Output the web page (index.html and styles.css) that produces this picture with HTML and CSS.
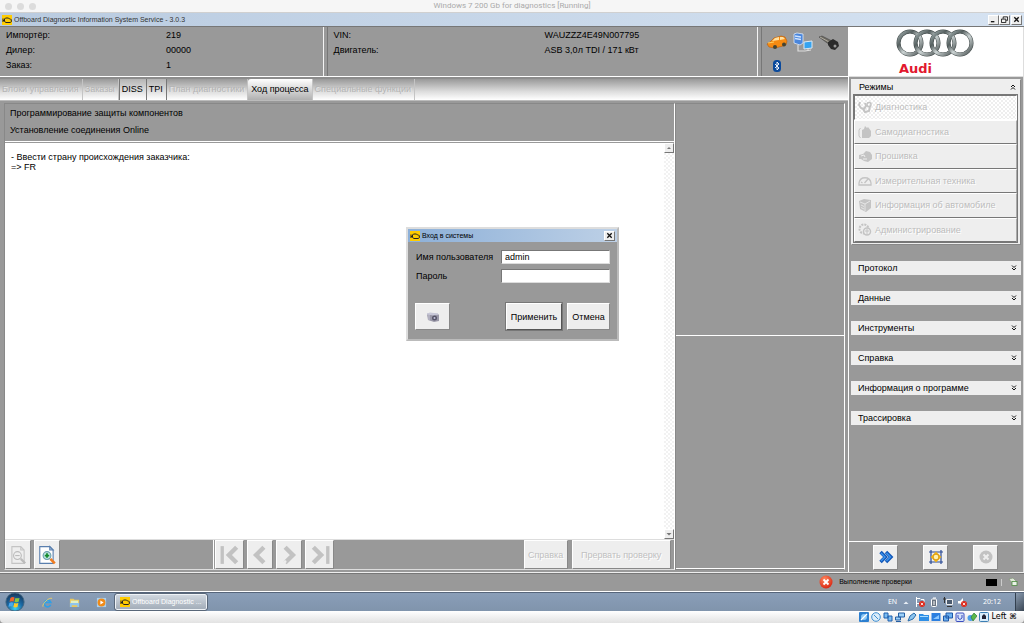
FILE: index.html
```html
<!DOCTYPE html>
<html lang="ru">
<head>
<meta charset="utf-8">
<meta name="viewport" content="width=device-width, initial-scale=1">
<title>Windows 7 200 Gb for diagnostics [Running]</title>
<link rel="stylesheet" href="styles.css">
</head>
<body>
<svg class="defs" aria-hidden="true">
  <defs>
    <linearGradient id="chrome" x1="0" y1="0" x2="1" y2="1"><stop offset="0" stop-color="#a5b2b2"/><stop offset=".3" stop-color="#566060"/><stop offset=".55" stop-color="#ccd4d4"/><stop offset="1" stop-color="#4a5252"/></linearGradient>
    <radialGradient id="orb" cx=".5" cy=".85" r=".8"><stop offset="0" stop-color="#3fd0f0"/><stop offset=".5" stop-color="#1b6aa5"/><stop offset="1" stop-color="#17395f"/></radialGradient>
    <radialGradient id="red" cx=".4" cy=".3" r=".8"><stop offset="0" stop-color="#ff8a60"/><stop offset="1" stop-color="#d51a08"/></radialGradient>
  </defs>
  <symbol id="engine" viewBox="0 0 10 10"><rect width="10" height="10" fill="#ffcc00"/><path d="M1 3.500v3.500M1 5.500h1.500M2.500 4l1-1h3l1 1h1l.8.800v2l-1 .7H4L2.500 6.500z" fill="none" stroke="#222" stroke-width="1"/></symbol>
  <symbol id="up2" viewBox="0 0 6 6"><path d="M1 3l2-2 2 2M1 5.500l2-2 2 2" fill="none" stroke="#111"/></symbol>
  <symbol id="down2" viewBox="0 0 6 6"><path d="M1 .5l2 2 2-2M1 3l2 2 2-2" fill="none" stroke="#111"/></symbol>
  <symbol id="cross" viewBox="0 0 8 8"><path d="M1.500 1.500l5 5m0-5l-5 5" stroke="#111" stroke-width="1.500"/></symbol>
</svg>

<header class="host-title"><span class="lights"><i></i><i></i><i></i></span>Windows 7 200 Gb for diagnostics [Running]</header>

<div class="app-title">
  <svg class="i10"><use href="#engine"/></svg>
  <span class="app-name">Offboard Diagnostic Information System Service - 3.0.3</span>
  <button class="win-btn" aria-label="Свернуть"><svg viewBox="0 0 8 8"><path d="M1 6.500h4" stroke="#111" stroke-width="1.500"/></svg></button>
  <button class="win-btn" aria-label="Восстановить"><svg viewBox="0 0 8 8"><path d="M2.500 3V1h5v4H6M.5 3.500h5v4h-5z" fill="none" stroke="#111"/></svg></button>
  <button class="win-btn win-close" aria-label="Закрыть"><svg><use href="#cross"/></svg></button>
</div>

<div class="workspace">
  <main class="left">
    <section class="summary">
      <dl class="facts facts-order">
        <dt>Импортёр:</dt><dd>219</dd>
        <dt>Дилер:</dt><dd>00000</dd>
        <dt>Заказ:</dt><dd>1</dd>
      </dl>
      <dl class="facts facts-car">
        <dt>VIN:</dt><dd>WAUZZZ4E49N007795</dd>
        <dt>Двигатель:</dt><dd>ASB 3,0л TDI / 171 кВт</dd>
      </dl>
      <div class="devices">
        <svg viewBox="0 0 22 16"><path d="M1 9l3-2 4-4 7-2 4 1 2 4-1 4-3 1-8 2-6-1z" fill="#f58a12" stroke="#b85a08" stroke-width=".6"/><path d="M6 6l3-3 4-1v3zM14 2l3 0 2 2-5 1z" fill="#ffe0a0"/><path d="M2 8l6-1" stroke="#ffd060"/><circle cx="9" cy="12" r="2" fill="#443"/><circle cx="18" cy="9.500" r="2" fill="#443"/></svg>
        <svg viewBox="0 0 22 22"><path d="M2 2l3-1 6 1v9l-3 2-6-2z" fill="#4a86dc" stroke="#dde8f8" stroke-width=".8"/><path d="M3 4l6 1M3 6.500l6 1" stroke="#cfe3ff" stroke-width="1.500"/><path d="M6 13v6h7" fill="none" stroke="#ddd" stroke-width="1.200"/><path d="M12 10l8-1v7l-8 1z" fill="#35a3f0" stroke="#dceaf5"/><path d="M13 19l6-1M16 16v3" stroke="#ddd"/></svg>
        <svg viewBox="0 0 22 18"><path d="M1 3l3-1 10 5-2 4z" fill="#6d6a62" stroke="#444" stroke-width=".6"/><path d="M2 3l9 5" stroke="#b0aca0"/><path d="M10 8l5-3 5 3 1 4-4 4-4-1-3-4z" fill="#2b2b2b"/><circle cx="17" cy="12" r="1.500" fill="#999"/></svg>
        <svg viewBox="0 0 22 14"><rect x="7" y="1" width="8" height="12" rx="3.500" fill="#0b4a9c"/><path d="M9 5l4 4-2 2V3l2 2-4 4" fill="none" stroke="#fff" stroke-width=".9"/></svg>
      </div>
    </section>

    <nav class="tabs">
      <button class="tab" disabled>Блоки управления</button>
      <button class="tab" disabled>Заказы</button>
      <button class="tab on">DISS</button>
      <button class="tab on">TPI</button>
      <button class="tab" disabled>План диагностики</button>
      <button class="tab current">Ход процесса</button>
      <button class="tab" disabled>Специальные функции</button>
    </nav>

    <div class="body">
      <section class="process">
        <div class="steps"><p>Программирование защиты компонентов</p><p>Установление соединения Online</p></div>
        <div class="log">
          <p>- Ввести страну происхождения заказчика:<br>=&gt; FR</p>
          <div class="scroll">
            <button aria-label="Вверх"><svg viewBox="0 0 8 8"><path d="M2 5l2-2 2 2z" fill="#777"/></svg></button>
            <button aria-label="Вниз"><svg viewBox="0 0 8 8"><path d="M1.500 3h5L4 5.500z" fill="#777"/></svg></button>
          </div>
        </div>
        <div class="toolbar">
          <div class="tools tools-zoom">
            <button class="tool" disabled aria-label="Уменьшить"><svg viewBox="0 0 18 18"><path d="M3.500 1.500h8l3 3v12h-11zM11.500 1.500v3h3" fill="none" stroke="#c4c4c4"/><circle cx="8.500" cy="9.500" r="3.500" fill="#eee" stroke="#bbb"/><path d="M6.500 9.500h4" stroke="#bbb"/><path d="M11.500 12.500l4 4" stroke="#bbb" stroke-width="2"/></svg></button>
            <button class="tool" aria-label="Увеличить"><svg viewBox="0 0 18 18"><path d="M2.500 1.500h9l3 3v12h-12z" fill="#fff" stroke="#5a7fae"/><path d="M11.500 1.500v3h3z" fill="#b9d2ec" stroke="#5a7fae"/><path d="M12 12.500l4 4" stroke="#f07c20" stroke-width="2.400"/><circle cx="9" cy="9.500" r="3.500" fill="#bfe4dc" stroke="#6a9fae"/><path d="M7 9.500h4M9 7.500v4" stroke="#138a2e" stroke-width="1.600"/></svg></button>
          </div>
          <div class="tools tools-nav">
            <button class="tool tool-end" disabled aria-label="В начало"><svg viewBox="0 0 18 18"><path d="M2 1v16" stroke="#c2c2c2" stroke-width="3"/><path d="M15 2L8 9l7 7" fill="none" stroke="#c2c2c2" stroke-width="4"/></svg></button>
            <button class="tool" disabled aria-label="Назад"><svg viewBox="0 0 18 18"><path d="M12.500 2l-7 7 7 7" fill="none" stroke="#c2c2c2" stroke-width="4"/></svg></button>
            <button class="tool" disabled aria-label="Вперёд"><svg viewBox="0 0 18 18"><path d="M5.500 2l7 7-7 7" fill="none" stroke="#c2c2c2" stroke-width="4"/><circle cx="5.500" cy="15" r="1.300" fill="#eee"/></svg></button>
            <button class="tool tool-end" disabled aria-label="В конец"><svg viewBox="0 0 18 18"><path d="M16 1v16" stroke="#c2c2c2" stroke-width="3"/><path d="M3 2l7 7-7 7" fill="none" stroke="#c2c2c2" stroke-width="4"/></svg></button>
          </div>
          <button class="tool tool-help" disabled>Справка</button>
          <button class="tool tool-stop" disabled>Прервать проверку</button>
        </div>
      </section>
      <aside class="panes"><div class="pane-top"></div><div class="pane-bottom"></div></aside>
    </div>
  </main>

  <aside class="right">
    <div class="brand">
      <svg class="rings" viewBox="0 0 78 28"><g fill="none" stroke="#3d4646" stroke-width="4"><circle cx="14" cy="14" r="11.500"/><circle cx="31" cy="14" r="11.500"/><circle cx="47" cy="14" r="11.500"/><circle cx="64" cy="14" r="11.500"/></g><g fill="none" stroke="url(#chrome)" stroke-width="3"><circle cx="14" cy="14" r="11.500"/><circle cx="31" cy="14" r="11.500"/><circle cx="47" cy="14" r="11.500"/><circle cx="64" cy="14" r="11.500"/></g></svg>
      <span class="brand-name">Audi</span>
    </div>
    <div class="groups">
      <section class="modes">
        <button class="group">Режимы<svg><use href="#up2"/></svg></button>
        <div class="mode-list">
          <button class="mode pressed" disabled><svg viewBox="0 0 14 14"><path d="M2 2L1 5l2 3 3 1 2-3-1-3M5 9l2 3 4-1 1-5" fill="none" stroke="#c4c4c4" stroke-width="2"/><circle cx="11" cy="4.500" r="2" fill="none" stroke="#c4c4c4" stroke-width="1.500"/></svg>Диагностика</button>
          <button class="mode" disabled><svg viewBox="0 0 14 14"><path d="M4 13V5l2-1 1-3 2 2 1-1 3 4v5l-2 2z" fill="#c4c4c4"/><path d="M2.500 3L1 5v6l1.500 2" fill="none" stroke="#c4c4c4"/></svg>Самодиагностика</button>
          <button class="mode" disabled><svg viewBox="0 0 14 14"><path d="M1 6l4-1 3-3 4 1 2 3v4l-4 3-4-1-3-2-2 0z" fill="#c4c4c4"/><path d="M3 7l3-1 1 2M5 10l4 0" stroke="#eee" fill="none"/></svg>Прошивка</button>
          <button class="mode" disabled><svg viewBox="0 0 14 14"><path d="M1 11V9c1-7 11-7 12 0v2zM6.500 9L10 5M3 8l1.500 1" fill="none" stroke="#c4c4c4" stroke-width="1.300"/></svg>Измерительная техника</button>
          <button class="mode" disabled><svg viewBox="0 0 14 14"><path d="M1 3l5-2 7 1v8l-5 4-6-3z" fill="#c4c4c4"/><path d="M2 4l5 2 5-3M7 6v7M3 7l3 1.500M3 9.500L6 11" stroke="#eee" stroke-width=".8" fill="none"/></svg>Информация об автомобиле</button>
          <button class="mode" disabled><svg viewBox="0 0 14 14"><circle cx="6" cy="6" r="4.500" fill="none" stroke="#c4c4c4" stroke-width="2" stroke-dasharray="2 1"/><circle cx="9" cy="8.500" r="3.500" fill="#eee" stroke="#c4c4c4" stroke-width="1.500"/><path d="M7 8h4M9 6v6" stroke="#c4c4c4"/></svg>Администрирование</button>
        </div>
      </section>
      <button class="group">Протокол<svg><use href="#down2"/></svg></button>
      <button class="group">Данные<svg><use href="#down2"/></svg></button>
      <button class="group">Инструменты<svg><use href="#down2"/></svg></button>
      <button class="group">Справка<svg><use href="#down2"/></svg></button>
      <button class="group">Информация о программе<svg><use href="#down2"/></svg></button>
      <button class="group">Трассировка<svg><use href="#down2"/></svg></button>
    </div>
    <div class="actions">
      <button class="action" aria-label="Далее"><svg viewBox="0 0 16 16"><path d="M2.500 3l5 5-5 5M8 3l5 5-5 5" fill="none" stroke="#1257b8" stroke-width="3.400"/><path d="M3 4l4 4-4 4M8.500 4l4 4-4 4" fill="none" stroke="#3b94ee" stroke-width="1.400"/></svg></button>
      <button class="action" aria-label="Развернуть"><svg viewBox="0 0 16 16"><path d="M3 1v14M13 1v14M1 3h14M1 13h14" stroke="#2a4a94" stroke-width="1.200"/><circle cx="8" cy="8" r="3" fill="#fff2b0" stroke="#e0a010" stroke-width="1.400"/><path d="M8 2.500l2 2.500H6zM8 13.500L6 11h4zM2.500 8L5 6v4zM13.500 8L11 10V6z" fill="#f0b010"/></svg></button>
      <button class="action" disabled aria-label="Отмена"><svg viewBox="0 0 16 16"><circle cx="8" cy="8" r="6.500" fill="#c2c2c2"/><path d="M5.500 5.500l5 5m0-5l-5 5" stroke="#eee" stroke-width="2"/></svg></button>
    </div>
  </aside>
</div>

<div class="status">
  <svg class="i14" viewBox="0 0 14 14"><circle cx="7" cy="7" r="6.500" fill="url(#red)"/><path d="M4.500 4.500l5 5m0-5l-5 5" stroke="#fff" stroke-width="1.800"/></svg>
  <span class="status-text">Выполнение проверки</span>
  <span class="meter"><i></i></span>
  <svg class="i10" viewBox="0 0 10 10"><path d="M1 2l4-1 3 3v3L4 6z" fill="#dfe8d8" stroke="#7b8f70" stroke-width=".6"/><rect x="4" y="4.500" width="5" height="4" fill="#eaf2e8" stroke="#4b8a40" stroke-width=".8"/></svg>
</div>

<footer class="taskbar">
  <button class="start" aria-label="Пуск"><svg viewBox="0 0 22 22"><circle cx="11" cy="11" r="10" fill="url(#orb)" stroke="#40647f"/><path d="M6 6.500q2-1.500 4.500-.5l-1 4.500q-2-1-4.500.2z" fill="#f0622a"/><path d="M11.500 6.500q2 1 4.500 0l-1 4.300q-2.500 1-4.500 0z" fill="#8cc63f"/><path d="M4.800 12q2-1.200 4.400-.2L8.200 16q-2-1-4.400.2z" fill="#49a8ee"/><path d="M10.200 12.200q2 1 4.500 0l-1 4.300q-2.500 1-4.500 0z" fill="#ffc928"/></svg></button>
  <button class="quick" aria-label="Internet Explorer"><svg viewBox="0 0 12 12"><path d="M9.500 8.500A3.600 3.600 0 1 1 9.600 6H3" fill="none" stroke="#2f9fe6" stroke-width="1.800"/><path d="M1 10.500C0 7 8 0 11 1.500" fill="none" stroke="#f0d060"/></svg></button>
  <button class="quick" aria-label="Проводник"><svg viewBox="0 0 12 12"><path d="M1 2h4l1 1h5v8H1z" fill="#e8c860"/><path d="M2 4h8v3H2z" fill="#dff0c8"/><path d="M1 6.500h10V11H9V9H3v2H1z" fill="#8ec4ee"/></svg></button>
  <button class="quick" aria-label="Проигрыватель"><svg viewBox="0 0 12 12"><rect x="1" y="1" width="10" height="10" fill="#a8d0f0"/><circle cx="6" cy="6" r="4.300" fill="#f08a18"/><path d="M4.800 3.800L8.300 6 4.800 8.200z" fill="#fff"/></svg></button>
  <button class="task"><svg class="i10"><use href="#engine"/></svg>Offboard Diagnostic ...</button>
  <div class="tray">
    <span>EN</span>
    <svg class="tray-up" viewBox="0 0 10 10"><path d="M2.500 7L5 4.500 7.500 7z" fill="#e8eef5"/></svg>
    <svg viewBox="0 0 10 10"><path d="M1.500 0v10M2 1.500h3l1 1h3v4H2" fill="none" stroke="#fff"/><circle cx="7" cy="7" r="3" fill="#dc2a1c"/><path d="M5.800 5.800l2.400 2.400m0-2.400L5.800 8.200" stroke="#fff" stroke-width=".8"/></svg>
    <svg viewBox="0 0 10 10"><rect x="2.500" y="2" width="5" height="7.500" rx="1" fill="#6a7480" stroke="#fff"/><path d="M4 1h3M5 4v4" stroke="#fff"/></svg>
    <svg viewBox="0 0 10 10"><path d="M3.500 2.500h6v5h-6z" fill="#4c5c70" stroke="#eee"/><path d="M0 2h3M1.500 0v6M4 9.500h5" stroke="#333"/></svg>
    <svg viewBox="0 0 10 10"><path d="M1 4h2l3-3v8L3 6.500H1z" fill="#fff"/><circle cx="7" cy="7" r="3" fill="#dc2a1c"/><path d="M5.800 5.800l2.400 2.400m0-2.400L5.800 8.200" stroke="#fff" stroke-width=".8"/></svg>
    <time>20:12</time>
  </div>
  <button class="desktop" aria-label="Рабочий стол"></button>
</footer>

<footer class="host-status">
  <svg viewBox="0 0 10 10"><rect width="10" height="10" rx="1" fill="#2c7fd0"/><circle cx="5" cy="5" r="3" fill="#8cc8f4"/><path d="M2 8l6-6" stroke="#fff" stroke-width="1.200"/></svg>
  <svg viewBox="0 0 10 10"><circle cx="5" cy="5" r="4.300" fill="#dcedfa" stroke="#3f8fd2"/><path d="M3 3l4 4" stroke="#3f8fd2"/></svg>
  <svg viewBox="0 0 10 10"><path d="M1 1h4v5H1zM5 4h4v5H5z" fill="#7cbcf0" stroke="#1c5fae"/></svg>
  <svg viewBox="0 0 10 10"><path d="M3.500 1h6v4h-6zM.5 5h5v3h-5z" fill="#9cd0f8" stroke="#245fa4"/><path d="M1 9.500h5" stroke="#245fa4"/></svg>
  <svg viewBox="0 0 10 10"><path d="M1 9l2-5 4-3 2 2-3 4z" fill="#8cc4ee" stroke="#2a6cab"/></svg>
  <svg viewBox="0 0 10 10"><path d="M0 2h4l1 1h5v6H0z" fill="#2f8fe6"/><path d="M1 4.500h8" stroke="#a8dcff"/></svg>
  <svg viewBox="0 0 10 10"><rect x=".5" y="1" width="9" height="8" fill="#2c7fe0"/><path d="M2 7l6-4v4z" fill="#8cc8ff"/></svg>
  <svg viewBox="0 0 10 10"><path d="M3 1h6.500v5H3zM.5 4h5v5h-5z" fill="#6cb0f0" stroke="#1f58a8"/></svg>
  <svg viewBox="0 0 10 10"><rect x="1" y="1" width="8" height="8.500" rx="1" fill="#d4e2fa" stroke="#3c4fc0"/><path d="M3 3v3l2 1.500L7 6V3" fill="none" stroke="#3c4fc0"/></svg>
  <svg viewBox="0 0 10 10"><circle cx="3.500" cy="6" r="3" fill="#4c9ee8"/><path d="M4 5l3-4 3 3-4 5z" fill="#5cb848" stroke="#2c7a34" stroke-width=".7"/></svg>
  <svg viewBox="0 0 10 10"><rect x=".5" y=".5" width="9" height="9" rx="1" fill="#d8ecfa" stroke="#3c7fb4"/><path d="M3 4l2-2 2 2v3H3z" fill="#223"/></svg>
  <span>Left ⌘</span>
</footer>

<form class="dialog" role="dialog" aria-labelledby="dialog-title">
  <div class="dialog-title"><svg class="i10"><use href="#engine"/></svg><span id="dialog-title">Вход в системы</span><button type="button" class="win-btn" aria-label="Закрыть"><svg><use href="#cross"/></svg></button></div>
  <div class="dialog-fields">
    <label for="user">Имя пользователя</label><input id="user" type="text" value="admin" autofocus>
    <label for="pass">Пароль</label><input id="pass" type="password">
  </div>
  <div class="dialog-actions">
    <button type="button" class="camera" aria-label="Снимок экрана"><svg viewBox="0 0 14 12"><path d="M1 3l3-1 8 1 1 1v6l-5 1-6-2z" fill="#9a98a8"/><path d="M1 3l3-1 8 1-4 1zM3 4v5" fill="#d4d4e4" stroke="#c8c8d8"/><circle cx="8.500" cy="7" r="2.500" fill="#565468"/><circle cx="8.500" cy="7" r="1" fill="#c0c0d8"/></svg></button>
    <button type="submit" class="apply">Применить</button>
    <button type="button" class="cancel">Отмена</button>
  </div>
</form>
</body>
</html>
```
FILE: styles.css
```css
* { box-sizing: border-box; }
body {
  margin: 0;
  min-height: 100vh;
  display: flex;
  flex-direction: column;
  position: relative;
  background: #999;
  color: #000;
  font: 9px/14px "Liberation Sans", Arial, sans-serif;
}
button, input { font: inherit; color: inherit; margin: 0; padding: 0; border: 0; border-radius: 0; }
input:focus { outline: none; }
p, dl, dd { margin: 0; }
svg { display: block; flex: none; }
.defs { position: absolute; width: 0; height: 0; }
.i10 { width: 10px; height: 10px; }
.i14 { width: 14px; height: 14px; }

.host-title {
  height: 13px;
  display: grid;
  place-items: center;
  position: relative;
  background: #f6f6f6;
  border-bottom: 1px solid #d0d0d0;
  color: #aaa;
  font: 8px/12px Roboto, sans-serif;
}
.lights { position: absolute; left: 5px; display: flex; gap: 5px; }
.lights i { width: 7px; height: 7px; border-radius: 50%; background: #dcdcdc; }

.app-title {
  height: 13px;
  display: flex;
  align-items: center;
  padding: 0 2px;
  background: linear-gradient(90deg, #b9cbe0, #d6e3f2);
  color: #333;
  font-size: 7px;
  line-height: 12px;
}
.app-name { flex: 1; padding-left: 2px; }
.win-btn {
  width: 11px;
  height: 10px;
  display: grid;
  place-items: center;
  background: #eee;
  border: 1px solid;
  border-color: #fff #777 #777 #fff;
}
.win-btn svg { width: 7px; height: 7px; }
.win-close { margin-left: 1px; }

.workspace { flex: 1; display: flex; border-top: 1px solid #777; }
.left { flex: 1; min-width: 0; display: flex; flex-direction: column; }
.summary { height: 50px; display: flex; gap: 3px; border-bottom: 1px solid #fff; }
.facts {
  display: grid;
  grid-auto-rows: 15px;
  align-content: start;
  padding: 1px 6px;
  border-right: 1px solid #f4f4f4;
  line-height: 15px;
}
.facts-order { flex: 320; grid-template-columns: 160px 1fr; }
.facts-car { flex: 430; grid-template-columns: 211px 1fr; border-left: 1px solid #777; }
.devices {
  width: 87px;
  display: grid;
  grid-template-columns: repeat(3, 22px);
  grid-template-rows: 22px 16px;
  gap: 4px;
  align-content: start;
  align-items: center;
  padding: 5px 0 0 4px;
  border-left: 1px solid #777;
}
.devices svg { width: 22px; max-height: 22px; }

.tabs {
  height: 24px;
  display: flex;
  border-top: 2px solid #8c8c8c;
  border-bottom: 1px solid #bbb;
  background: linear-gradient(#999, #ddd 60%, #fff);
}
.tab { padding: 0 3px 2px 2px; border-right: 1px solid #c4c4c4; background: none; color: #b4b4b4; white-space: nowrap; text-shadow: 1px 1px #e4e4e4; }
.tab.on { border-left: 1px solid #777; border-right-color: #777; background: linear-gradient(#b4b4b4, #fff); color: #000; text-shadow: none; }
.tab.on + .tab.on { border-left: 0; }
.tab.current { padding: 0 3px 2px; background: linear-gradient(#fff, #b0b0b0); color: #000; border-radius: 3px 0 0; text-shadow: none; }

.body { flex: 1; display: flex; padding: 2px 3px 2px 4px; background: #999; }
.process { flex: 671; display: flex; flex-direction: column; border: 1px solid #888; border-right-color: #fff; border-bottom-color: #ddd; }
.steps { padding: 1px 5px 2px; border-bottom: 1px solid #fff; line-height: 17px; }
.log { flex: 1; display: flex; justify-content: space-between; margin-top: 1px; background: #fff; border-bottom: 1px solid #ddd; line-height: 10px; }
.log p { padding: 9px 6px; }
.scroll {
  width: 10px;
  display: flex;
  flex-direction: column;
  justify-content: space-between;
  background: repeating-conic-gradient(#f2f2f2 0 25%, #fff 0 50%) 0 0 / 4px 4px;
}
.scroll button { width: 10px; height: 10px; background: #eee; border: 1px solid; border-color: #fff #777 #777 #fff; }
.scroll svg { width: 8px; height: 8px; }
.toolbar { display: flex; height: 29px; gap: 4px; }
.tools { display: flex; gap: 3px; }
.tools-zoom { width: 209px; border-right: 1px solid #fff; }
.tools-nav { flex: 1; margin-left: -3px; }
.tool, .action, .dialog-actions button {
  display: grid;
  place-items: center;
  background: #eee;
  border: 1px solid;
  border-color: #fff #888 #888 #fff;
  white-space: nowrap;
}
.tool { width: 26px; color: #c0c0c0; text-shadow: 1px 1px #fff; }
.tool svg { width: 20px; height: 20px; }
.tool-end { width: 29px; }
.tool-help { width: 44px; }
.tool-stop { width: 99px; margin-right: 3px; }

.panes { flex: 169; display: flex; flex-direction: column; border: 1px solid #888; border-right-color: #fff; }
.pane-top { flex: 233; border-bottom: 1px solid #fff; }
.pane-bottom { flex: 234; border-bottom: 1px solid #fff; }

.right { width: 176px; display: flex; flex-direction: column; border-left: 1px solid #fff; border-right: 1px solid #ddd; }
.brand { height: 50px; padding: 1px 47px 0; background: #fff; border-bottom: 1px solid #ddd; }
.rings { width: 78px; height: 30px; }
.brand-name { display: block; padding-left: 3px; color: #e2182e; font: bold 13px/22px "DejaVu Sans", sans-serif; }
.groups { flex: 1; display: flex; flex-direction: column; gap: 16px; padding: 2px 2px 0; border-bottom: 1px solid #fff; }
.group {
  width: 100%;
  height: 14px;
  display: flex;
  align-items: center;
  justify-content: space-between;
  padding: 0 4px 0 7px;
  background: #eee;
  text-align: left;
}
.group svg { width: 6px; height: 6px; }
.modes { background: #eee; border: 1px solid; border-color: #eee #888 #888 #eee; }
.mode-list { height: 149px; display: grid; grid-template-rows: repeat(6, 1fr); margin: 0 2px 1px 1px; border: 1px solid #777; }
.mode {
  display: flex;
  align-items: center;
  gap: 3px;
  padding: 0 3px;
  background: #eee;
  border: 1px solid;
  border-color: #fff #aaa #777 #fff;
  color: #bcbcbc;
  text-shadow: 1px 1px #fff;
}
.mode svg { width: 14px; height: 14px; }
.mode.pressed { background: repeating-conic-gradient(#eee 0 25%, #fff 0 50%) 0 0 / 4px 4px; border-color: #777 #fff #fff #777; }
.actions { height: 30px; display: flex; justify-content: space-between; align-items: center; padding: 0 25px 0 24px; }
.action { width: 25px; height: 25px; }
.action svg { width: 16px; height: 16px; }

.status {
  height: 20px;
  display: flex;
  align-items: center;
  gap: 6px;
  padding: 0 6px 0 80%;
  border-top: 1px solid #eee;
  border-bottom: 1px solid #fff;
  box-shadow: inset 0 1px #777;
  font-size: 7px;
  line-height: 10px;
}
.status-text { flex: 1; white-space: nowrap; }
.meter { width: 16px; height: 7px; border-right: 1px solid #ccc; }
.meter i { display: block; width: 11px; height: 7px; background: #000; }

.taskbar {
  height: 19px;
  display: flex;
  align-items: center;
  background: linear-gradient(#8a9eb8, #8094ac);
  border-top: 1px solid #56657a;
  color: #fff;
  font: 7px/12px "Noto Sans", sans-serif;
}
.start { width: 22px; height: 20px; margin: 0 8px 0 4px; background: none; }
.start svg { width: 22px; height: 20px; }
.quick { width: 27px; display: grid; place-items: center; background: none; }
.quick svg { width: 11px; height: 11px; }
.task {
  width: 92px;
  height: 16px;
  display: flex;
  align-items: center;
  gap: 2px;
  padding: 0 4px;
  background: linear-gradient(#d0d7df, #a3adb9);
  border: 1px solid #eef2f6;
  outline: 1px solid #596779;
  border-radius: 2px;
  font: 7px/12px "Liberation Sans", sans-serif;
  white-space: nowrap;
}
.tray { display: flex; align-items: center; gap: 4px; margin-left: auto; }
.tray svg { width: 10px; height: 10px; }
.tray time { margin: 0 14px 0 12px; }
.desktop { width: 9px; height: 18px; background: linear-gradient(135deg, #8a9bb0, #3a4654); border-left: 1px solid #33404f; }

.host-status {
  height: 12px;
  display: flex;
  align-items: center;
  justify-content: flex-end;
  gap: 2px;
  padding-right: 7px;
  background: linear-gradient(#fff, #e2e2e2);
  border-radius: 0 0 4px 4px;
  font: 8px/12px "DejaVu Sans", sans-serif;
}
.host-status svg { width: 10px; height: 10px; }

.dialog {
  position: absolute;
  top: 227px;
  left: calc(50% - 106px);
  width: 213px;
  background: #999;
  border: 2px solid;
  border-color: #ddd #bbb #bbb #ddd;
}
.dialog-title {
  height: 13px;
  display: flex;
  align-items: center;
  gap: 2px;
  padding: 0 2px;
  background: linear-gradient(90deg, #8db0d8, #bdd0e6);
  font-size: 7px;
  line-height: 12px;
}
.dialog-title span { flex: 1; }
.dialog-fields { display: grid; grid-template-columns: 85px 1fr; row-gap: 5px; padding: 8px 7px 0 8px; }
.dialog-fields label { white-space: nowrap; }
.dialog-fields input { width: 100%; height: 14px; padding: 0 3px; background: #fff; border: 1px solid; border-color: #777 #ddd #ddd #777; }
.dialog-actions { display: flex; gap: 5px; padding: 20px 7px 9px; }
.dialog-actions button { height: 27px; }
.dialog-actions .camera { width: 35px; margin-right: auto; }
.dialog-actions svg { width: 14px; height: 12px; }
.dialog-actions .apply { width: 56px; border-color: #fff #555 #555 #fff; box-shadow: 0 0 0 1px #777; }
.dialog-actions .cancel { width: 43px; }
```
